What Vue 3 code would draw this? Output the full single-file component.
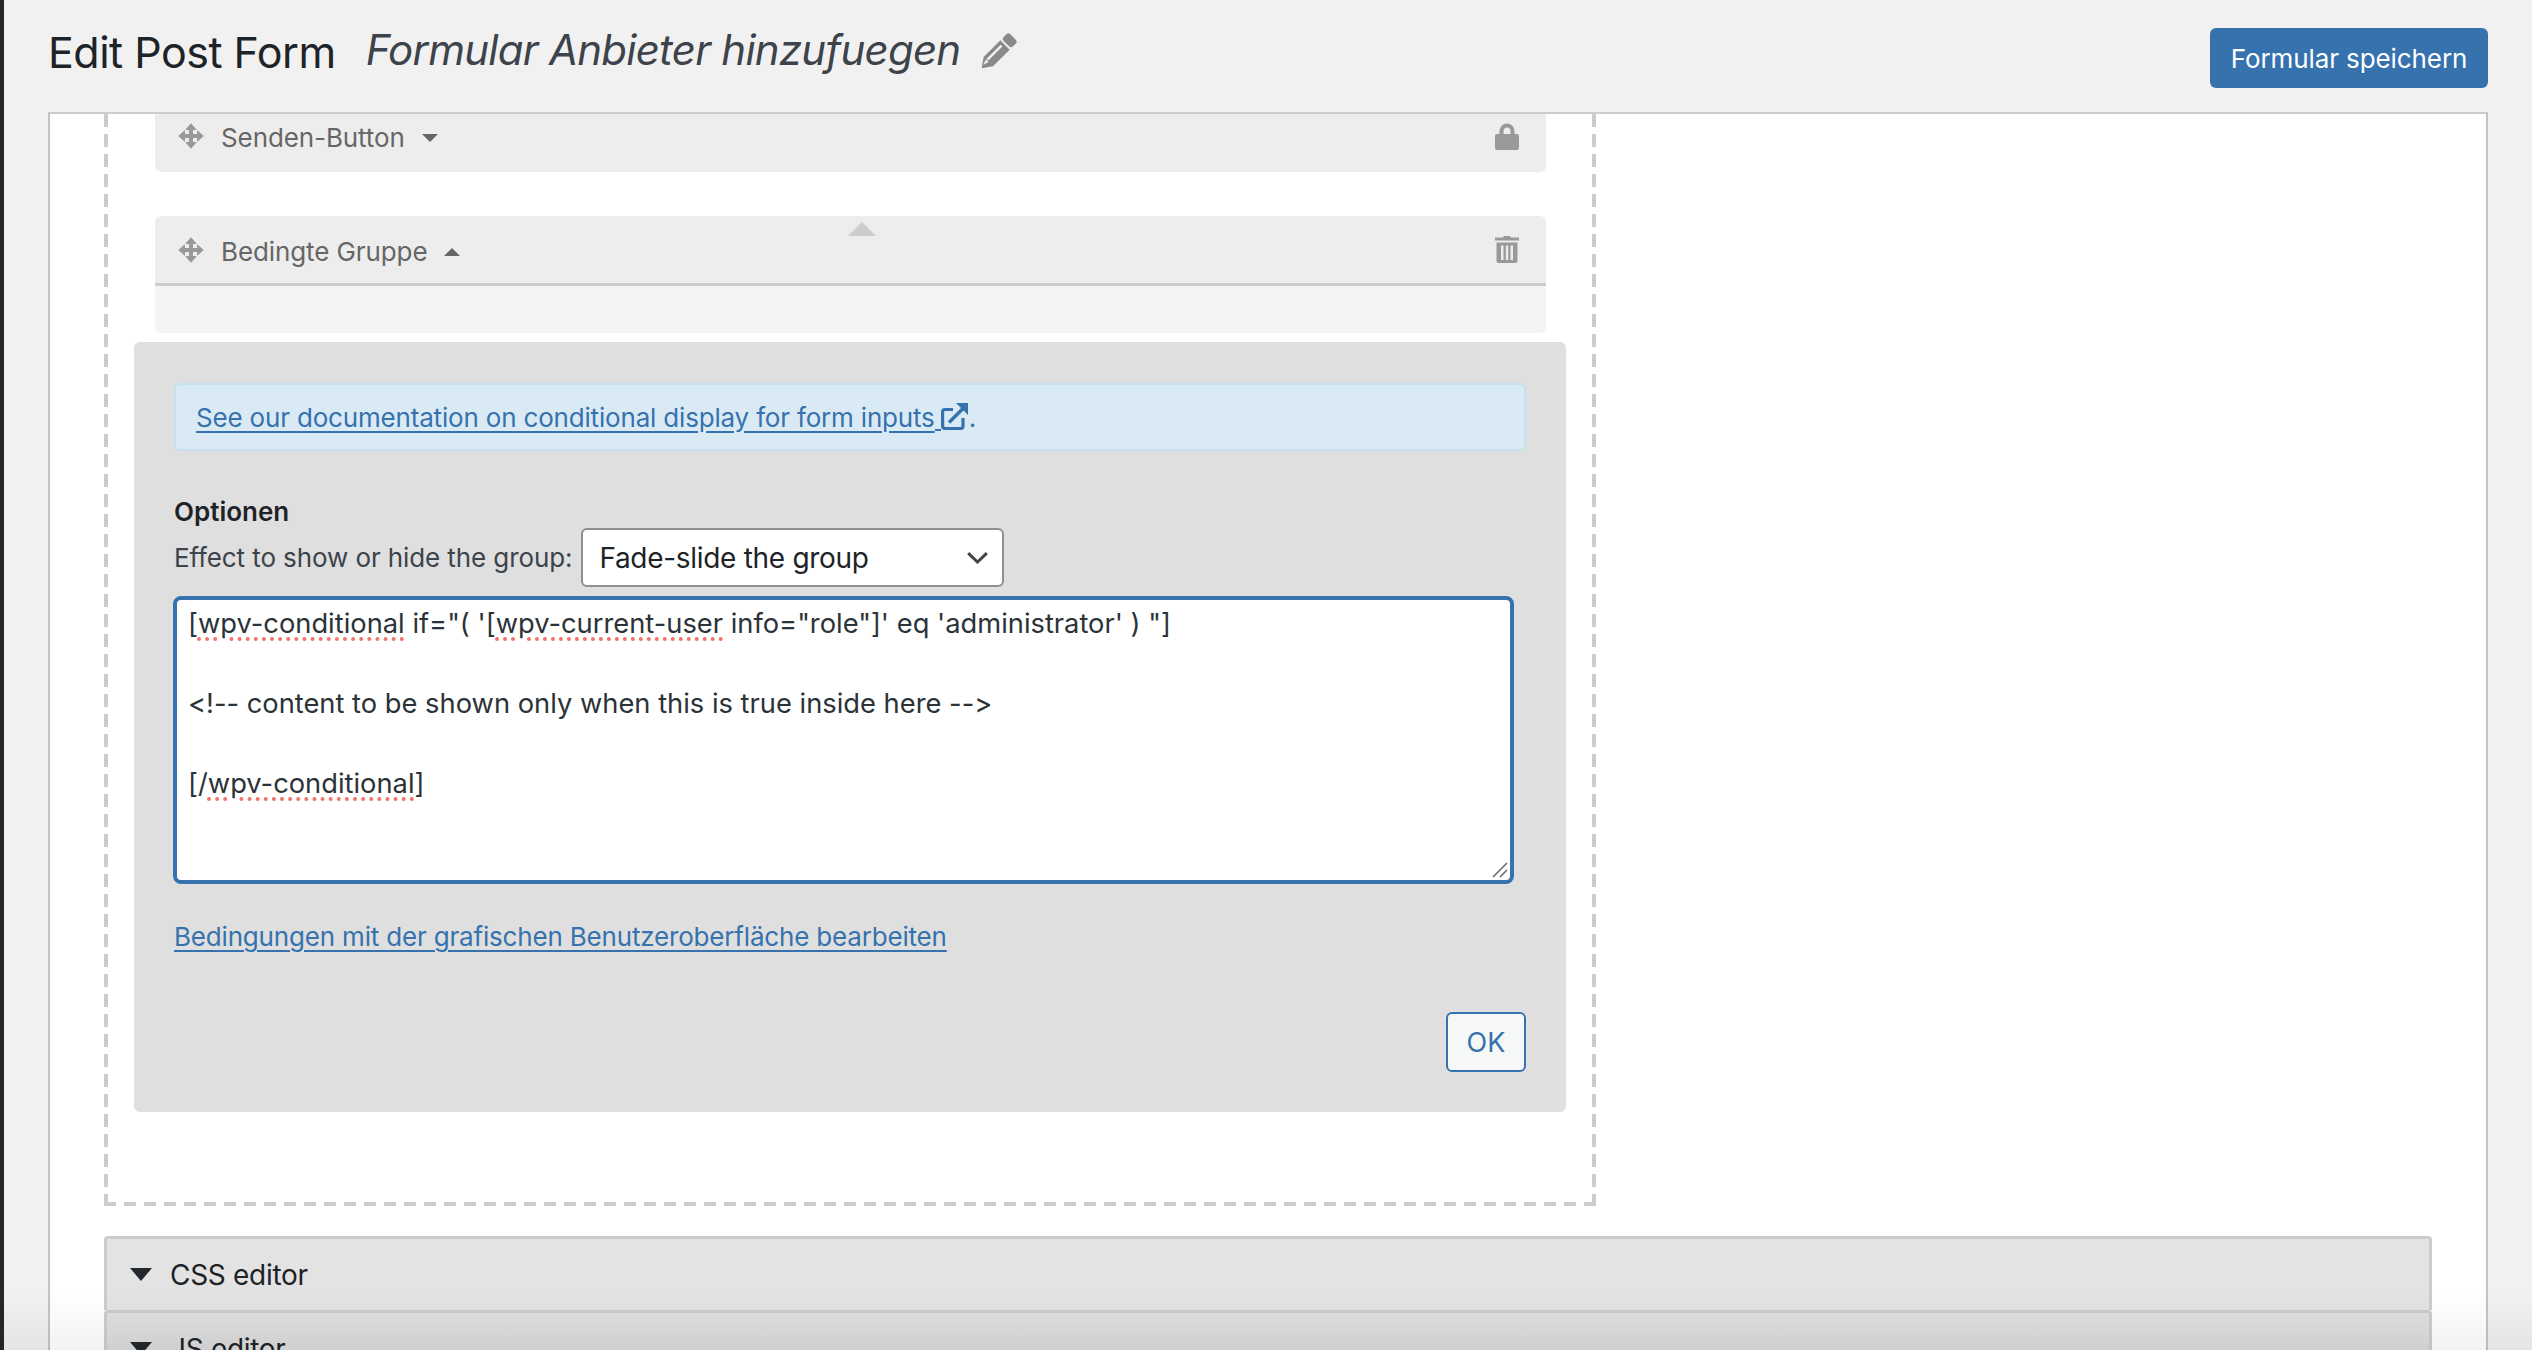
<script setup>
const lines = [
  { parts: [['[', 0], ['wpv-conditional', 1], [' if="( \'[', 0], ['wpv-current-user', 1], [' info="role"]\' eq \'administrator\' ) "]', 0]] },
  { parts: [['\u00a0', 0]] },
  { parts: [['<!-- content to be shown only when this is true inside here -->', 0]] },
  { parts: [['\u00a0', 0]] },
  { parts: [['[/', 0], ['wpv-conditional', 1], [']', 0]] },
]
</script>

<template>
  <div class="page">
    <div class="rail"></div>
    <div class="wrap">
      <header class="head">
        <h1 class="title">Edit Post Form</h1>
        <span class="name">Formular Anbieter hinzufuegen</span>
        <svg class="pencil" viewBox="0 0 36 36"><g transform="rotate(45 18 18)"><rect x="11" y="-6" width="14" height="10" rx="3" fill="#8a8a8a"/><path fill="#8a8a8a" d="M11 6h14v25l-7 10-7-10z"/><rect x="14.500" y="9" width="2.600" height="21" fill="#f1f1f1"/><path fill="#f1f1f1" d="M14.500 31h4l-2 6z"/></g></svg>
        <button class="save">Formular speichern</button>
      </header>
      <main class="box">
        <section class="drop">
          <div class="row closed">
            <svg class="move" viewBox="0 0 26 26"><g fill="#999" stroke="#999" stroke-width="1" stroke-linejoin="round"><path d="M13 .800L18 6.500H8zM13 25.200L18 19.500H8zM.800 13L6.500 8v10zM25.200 13L19.500 8v10z"/><path d="M11.500 5h3v16h-3zM5 11.500h16v3H5z"/></g></svg>
            <span class="rowlabel">Senden-Button</span>
            <span class="caret down"></span>
            <svg class="tool" viewBox="0 0 24 27"><path fill="#999" d="M4.500 11V8a7.500 7.500 0 0 1 15 0v3h2.500a2 2 0 0 1 2 2v12a2 2 0 0 1-2 2H2a2 2 0 0 1-2-2V13a2 2 0 0 1 2-2zm4 0h7V8a3.500 3.500 0 0 0-7 0z"/></svg>
          </div>
          <div class="group">
            <div class="row open">
              <span class="pointer"></span>
              <svg class="move" viewBox="0 0 26 26"><g fill="#999" stroke="#999" stroke-width="1" stroke-linejoin="round"><path d="M13 .800L18 6.500H8zM13 25.200L18 19.500H8zM.800 13L6.500 8v10zM25.200 13L19.500 8v10z"/><path d="M11.500 5h3v16h-3zM5 11.500h16v3H5z"/></g></svg>
              <span class="rowlabel">Bedingte Gruppe</span>
              <span class="caret up"></span>
              <svg class="tool" viewBox="0 0 24 27"><path fill="#999" d="M9 0h6l1 1.500h8v3H0v-3h8zM1.500 6.500h21V25a2 2 0 0 1-2 2h-17a2 2 0 0 1-2-2zm4.500 3v14.500h2.500V9.500zm4.800 0v14.500h2.400V9.500zm4.700 0v14.500H18V9.500z"/></svg>
            </div>
            <div class="groupbody"></div>
          </div>
          <div class="panel">
            <div class="notice">
              <a class="link" href="#">See our documentation on conditional display for form inputs</a><span class="gapsp">&nbsp;</span><svg class="ext" viewBox="0 0 27 27"><path fill="none" stroke="#3572ae" stroke-width="3.200" d="M22 15v8a2.500 2.500 0 0 1-2.500 2.500H4A2.500 2.500 0 0 1 1.600 23V9A2.500 2.500 0 0 1 4 6.500h8"/><path fill="none" stroke="#3572ae" stroke-width="3.600" d="M8 19.500L22 5.500"/><path fill="#3572ae" d="M15 0h12v12z"/></svg><span class="dot">.</span>
            </div>
            <h3 class="opts">Optionen</h3>
            <div class="effect">
              <span class="effectlabel">Effect to show or hide the group:</span>
              <div class="select">
                <span>Fade-slide the group</span>
                <svg class="chev" viewBox="0 0 21 12"><path fill="none" stroke="#444" stroke-width="3" d="M1.200 1.200L10.500 10l9.300-8.800"/></svg>
              </div>
            </div>
            <div class="area">
              <div v-for="(l, i) in lines" :key="i" class="line">
                <template v-for="(p, j) in l.parts" :key="j"><span :class="{ spell: p[1] }">{{ p[0] }}</span></template>
              </div>
              <svg class="grip" viewBox="0 0 16 16"><path fill="none" stroke="#666" stroke-width="1.500" d="M15 1L1 15M15 8l-7 7"/></svg>
            </div>
            <a class="link gui" href="#">Bedingungen mit der grafischen Benutzeroberfläche bearbeiten</a>
            <div class="actions"><button class="ok">OK</button></div>
          </div>
        </section>
        <div class="acc first"><span class="tri"></span><span>CSS editor</span></div>
        <div class="acc second"><span class="tri"></span><span>JS editor</span></div>
      </main>
    </div>
    <div class="fade"></div>
  </div>
</template>

<style>
html, body { margin: 0; overflow: hidden; background: #f1f1f1; }
</style>

<style scoped>
.page { position: relative; display: flex; width: 2532px; height: 1350px; overflow: hidden; background: #f1f1f1; font-family: Inter, "Liberation Sans", sans-serif; color: #23282d; font-variant-ligatures: none; font-feature-settings: "calt" 0; }
.rail { flex: none; width: 4px; background: #23282d; }
.wrap { flex: none; width: 2440px; margin-left: 44px; display: flex; flex-direction: column; }
.head { flex: none; height: 112px; display: flex; align-items: flex-start; }
.title { margin: 30px 0 0; font-size: 43px; font-weight: 400; line-height: 44px; letter-spacing: -0.5px; color: #1d2327; }
.name { margin: 28px 0 0 30px; font-size: 42px; font-style: italic; line-height: 44px; letter-spacing: -0.75px; color: #3c434a; }
.pencil { margin: 36px 0 0 20px; width: 34px; height: 34px; overflow: visible; }
.save { margin: 28px 0 0 auto; width: 278px; height: 60px; border: 0; border-radius: 6px; background: #3572ae; color: #fff; font: 26px Inter, sans-serif; letter-spacing: -0.1px; }
.box { flex: 1; border: 2px solid #c3c4c7; border-top-color: #ccc; border-bottom: 0; background: #fff; padding-left: 54px; box-sizing: border-box; width: 2440px; }
.drop { width: 1492px; height: 1092px; box-sizing: border-box; padding: 0 30px;
  background:
    repeating-linear-gradient(to bottom, #ccc 0 13px, transparent 13px 20px) left top / 4px 100% no-repeat,
    repeating-linear-gradient(to bottom, #ccc 0 13px, transparent 13px 20px) right top / 4px 100% no-repeat,
    repeating-linear-gradient(to right, #ccc 0 12px, transparent 12px 20px) left bottom / 100% 4px no-repeat;
}
.row { display: flex; align-items: center; background: #ededed; padding: 0 27px 0 23px; box-sizing: border-box; color: #666; font-size: 26px; margin: 0 20px 0 21px; }
.closed { height: 58px; border-radius: 0 0 6px 6px; padding-bottom: 14px; }
.open { position: relative; height: 70px; border-radius: 6px 6px 0 0; border-bottom: 3px solid #ccc; margin: 0; }
.group { margin: 44px 20px 0 21px; }
.groupbody { height: 47px; background: #f4f4f4; border-radius: 0 0 6px 6px; }
.move { width: 26px; height: 26px; margin-right: 17px; flex: none; }
.rowlabel { line-height: 32px; padding-top: 4px; letter-spacing: -0.1px; }
.caret { width: 0; height: 0; border-left: 8px solid transparent; border-right: 8px solid transparent; margin: 4px 0 0 17px; }
.caret.down { border-top: 8px solid #666; }
.caret.up { border-bottom: 8px solid #666; }
.tool { width: 24px; height: 27px; margin-left: auto; flex: none; }
.pointer { position: absolute; left: 693px; top: 6px; width: 0; height: 0; border-left: 14px solid transparent; border-right: 14px solid transparent; border-bottom: 14px solid #ccc; }
.panel { margin-top: 9px; width: 1432px; height: 770px; box-sizing: border-box; background: #dfdfdf; border-radius: 6px; padding: 41px 40px 0; display: flex; flex-direction: column; align-items: flex-start; }
.notice { width: 100%; height: 68px; box-sizing: border-box; background: #daeaf5; border: 2px solid #c5e2ec; border-radius: 6px; padding: 0 0 0 20px; display: flex; align-items: center; font-size: 26px; color: #3572ae; }
.link { color: #3572ae; font-size: 26px; letter-spacing: -0.18px; text-decoration: underline; text-underline-offset: 4px; }
.gapsp { text-decoration: underline; width: 6px; overflow: hidden; }
.ext { width: 27px; height: 27px; flex: none; margin-top: -2px; }
.dot { margin-left: 1px; }
.opts { margin: 45px 0 0; font-size: 26px; line-height: 32px; font-weight: 600; color: #1d2327; }
.effect { display: flex; align-items: center; gap: 9px; }
.effectlabel { font-size: 26px; letter-spacing: -0.1px; color: #3c434a; }
.select { width: 423px; height: 59px; box-sizing: border-box; background: #fff; border: 2px solid #8c8f94; border-radius: 6px; display: flex; align-items: center; justify-content: space-between; padding: 0 14px 0 16px; font-size: 28px; letter-spacing: -0.3px; color: #1d2327; }
.chev { width: 21px; height: 12px; }
.area { position: relative; margin: 9px 0 0 -1px; width: 1341px; height: 288px; box-sizing: border-box; background: #fff; border: 4px solid #3572ae; border-radius: 8px; padding: 4px 0 0 11px; font-size: 27.300px; line-height: 40px; color: #2c3338; }
.line { height: 40px; white-space: pre; }
.spell { text-decoration: underline dotted #f2736b 4px; text-underline-offset: 4px; }
.grip { position: absolute; right: 2px; bottom: 2px; width: 16px; height: 16px; }
.gui { margin-top: 37px; line-height: 32px; }
.actions { margin-top: 59px; width: 100%; display: flex; justify-content: flex-end; }
.ok { width: 80px; height: 60px; box-sizing: border-box; border: 2px solid #3572ae; border-radius: 6px; background: #f6f7f7; color: #3572ae; font: 27px Inter, sans-serif; }
.acc { width: 2328px; height: 74px; box-sizing: border-box; border: 3px solid #ccc; border-bottom: 0; border-radius: 4px 4px 0 0; background: #e3e3e3; display: flex; align-items: center; padding-left: 23px; font-size: 28px; letter-spacing: -0.3px; color: #1d2327; gap: 18px; }
.first { margin-top: 30px; }
.second { background: linear-gradient(to bottom, #e0e0e0, #d6d6d6); }
.tri { width: 0; height: 0; border-left: 11.500px solid transparent; border-right: 11.500px solid transparent; border-top: 13px solid #23282d; }
.fade { position: absolute; left: 0; right: 0; bottom: 0; height: 60px; background: linear-gradient(to bottom, rgba(0,0,0,0), rgba(0,0,0,0.05)); pointer-events: none; }
</style>
